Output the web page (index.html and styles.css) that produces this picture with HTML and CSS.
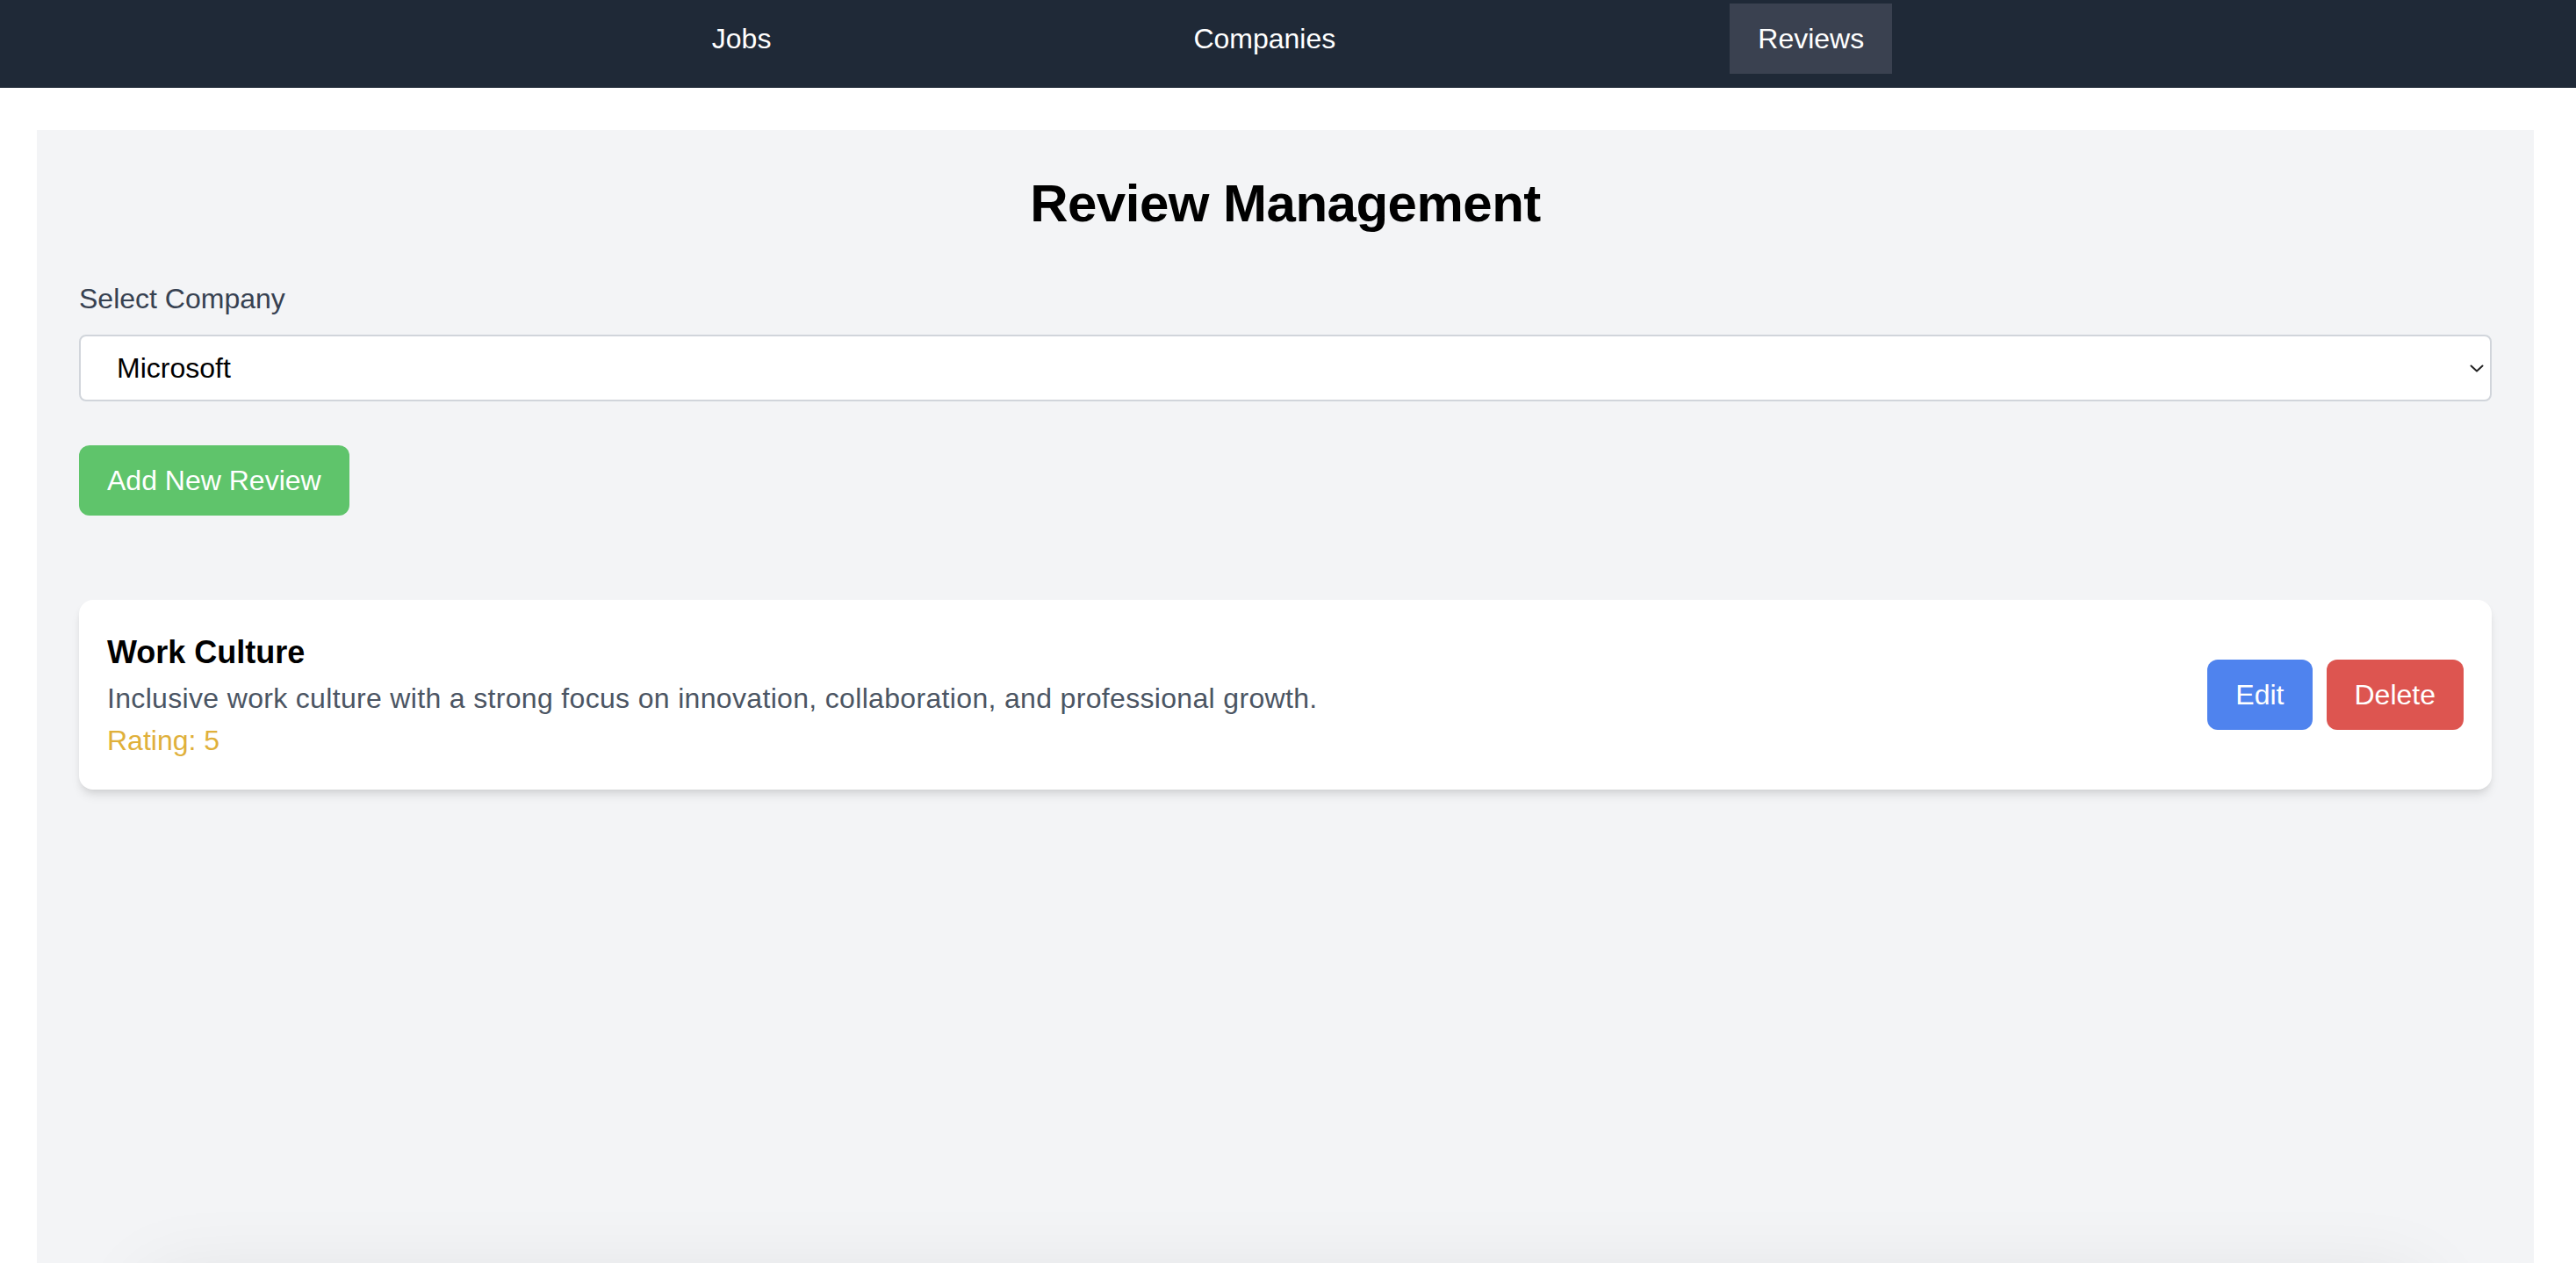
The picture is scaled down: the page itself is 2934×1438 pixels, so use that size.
FILE: index.html
```html
<!DOCTYPE html>
<html lang="en">
<head>
<meta charset="utf-8">
<title>Review Management</title>
<link rel="stylesheet" href="styles.css">
</head>
<body>
<nav class="topnav">
  <ul class="nav-list">
    <li><a class="nav-link" href="#">Jobs</a></li>
    <li><a class="nav-link" href="#">Companies</a></li>
    <li><a class="nav-link active" href="#">Reviews</a></li>
  </ul>
</nav>
<main class="panel">
  <h1 class="page-title">Review Management</h1>
  <div class="field">
    <label class="field-label" for="company">Select Company</label>
    <div class="select-wrap">
      <select id="company" class="select">
        <option>Microsoft</option>
      </select>
      <svg class="chevron" width="16" height="12" viewBox="0 0 16 12" aria-hidden="true"><path d="M1.5 3.5 L8 9.5 L14.5 3.5" fill="none" stroke="#222" stroke-width="2" stroke-linecap="round" stroke-linejoin="round"/></svg>
    </div>
  </div>
  <button class="btn btn-green">Add New Review</button>
  <ul class="review-list">
    <li class="review-card">
      <div class="review-body">
        <h3 class="review-title">Work Culture</h3>
        <p class="review-text">Inclusive work culture with a strong focus on innovation, collaboration, and professional growth.</p>
        <p class="review-rating">Rating: 5</p>
      </div>
      <div class="review-actions">
        <button class="btn btn-blue">Edit</button>
        <button class="btn btn-red">Delete</button>
      </div>
    </li>
  </ul>
  <section class="below-fold"></section>
</main>
</body>
</html>
```

FILE: styles.css
```css
* { box-sizing: border-box; }
html, body { margin: 0; padding: 0; }
body {
  background: #ffffff;
  font-family: "Liberation Sans", Arial, sans-serif;
  color: #000;
}
.topnav {
  background: #1f2937;
  height: 100px;
  padding-top: 4px;
}
.nav-list {
  list-style: none;
  margin: 0;
  padding: 0;
  display: flex;
  justify-content: center;
  gap: 417px;
}
.nav-link {
  display: block;
  padding: 16px 32px;
  font-size: 32px;
  line-height: 48px;
  color: #ffffff;
  text-decoration: none;
}
.nav-link.active { background: #3a4150; }

.panel {
  margin: 48px 48px 0 42px;
  background: #f3f4f6;
  padding: 48px 48px 0;
  overflow: hidden;
}
.page-title {
  margin: 0 0 48px;
  text-align: center;
  font-size: 60px;
  line-height: 72px;
  font-weight: 700;
  letter-spacing: -0.5px;
}
.field { margin-bottom: 50px; }
.field-label {
  display: block;
  font-size: 32px;
  line-height: 48px;
  color: #374151;
  margin-bottom: 17px;
}
.select-wrap { position: relative; }
.select {
  display: block;
  width: 100%;
  height: 76px;
  appearance: none;
  -webkit-appearance: none;
  background: #ffffff;
  border: 2px solid #d1d5db;
  border-radius: 8px;
  padding: 0 40px 0 41px;
  font-family: inherit;
  font-size: 32px;
  color: #000;
}
.chevron {
  position: absolute;
  right: 9px;
  top: 32px;
}
.btn {
  border: none;
  font-family: inherit;
  font-size: 32px;
  line-height: 48px;
  padding: 16px 32px;
  color: #ffffff;
  border-radius: 12px;
  cursor: pointer;
}
.btn-green { background: #5fc46b; }
.btn-blue { background: #4f83ee; }
.btn-red { background: #dd5550; }

.review-list {
  list-style: none;
  margin: 96px 0 0;
  padding: 0;
}
.review-card {
  background: #ffffff;
  border-radius: 16px;
  padding: 32px;
  display: flex;
  align-items: center;
  justify-content: space-between;
  box-shadow: 0 8px 12px -2px rgba(0,0,0,0.1), 0 4px 8px -4px rgba(0,0,0,0.1);
}
.review-title {
  margin: 0;
  font-size: 36px;
  line-height: 56px;
  font-weight: 700;
}
.review-text {
  margin: 0;
  font-size: 32px;
  line-height: 48px;
  color: #4b5563;
  letter-spacing: 0.33px;
}
.review-rating {
  margin: 0;
  font-size: 32px;
  line-height: 48px;
  color: #e0b03a;
}
.review-actions {
  display: flex;
  gap: 16px;
}
.below-fold {
  margin: 540px 60px 0;
  height: 400px;
  background: #f3f4f6;
  border-radius: 16px;
  box-shadow: 0 0 90px -20px rgba(0,0,0,0.09);
}
```
